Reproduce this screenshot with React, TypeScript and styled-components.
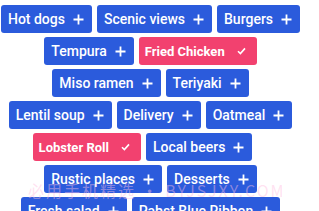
import React from "react";
import styled, { createGlobalStyle } from "styled-components";

interface ITag {
  label: string;
  picked?: boolean;
}

interface IRow {
  shift?: number;
  tags: ITag[];
}

const rows: IRow[] = [
  { tags: [{ label: "Hot dogs" }, { label: "Scenic views" }, { label: "Burgers" }] },
  { tags: [{ label: "Tempura" }, { label: "Fried Chicken", picked: true }] },
  { tags: [{ label: "Miso ramen" }, { label: "Teriyaki" }] },
  { tags: [{ label: "Lentil soup" }, { label: "Delivery" }, { label: "Oatmeal" }] },
  { shift: 16, tags: [{ label: "Lobster Roll", picked: true }, { label: "Local beers" }] },
  { tags: [{ label: "Rustic places" }, { label: "Desserts" }] },
  { tags: [{ label: "Fresh salad" }, { label: "Pabst Blue Ribbon" }] },
];

const PlusIcon = () => (
  <svg width="11" height="11" viewBox="0 0 11 11">
    <path d="M5.5 0.5v10M0.5 5.5h10" stroke="#fff" strokeWidth="1.8" fill="none" />
  </svg>
);

const CheckIcon = () => (
  <svg width="9" height="8" viewBox="0 0 9 8">
    <path d="M1 4.2l2.4 2.4L8 1.4" stroke="#fff" strokeWidth="1.6" fill="none" />
  </svg>
);

const App = () => {
  return (
    <>
      <GlobalStyle />
      <Page>
        <TagCloud>
          {rows.map((row, i) => (
            <TagRow key={i} $shift={row.shift}>
              {row.tags.map((tag) => (
                <Tag key={tag.label} $picked={tag.picked}>
                  <span>{tag.label}</span>
                  {tag.picked ? <CheckIcon /> : <PlusIcon />}
                </Tag>
              ))}
            </TagRow>
          ))}
        </TagCloud>
        <Watermark>必用手机精选 • BYJSJXY.COM</Watermark>
      </Page>
    </>
  );
};

export default App;

const GlobalStyle = createGlobalStyle`
  body {
    margin: 0;
    background: #fff;
    font-family: Roboto, "Noto Sans", sans-serif;
  }
`;

const Page = styled.div`
  position: relative;
  width: 319px;
  height: 211px;
  overflow: hidden;
`;

const TagCloud = styled.div`
  width: 301px;
  padding-top: 5px;
  display: flex;
  flex-direction: column;
  align-items: center;
  gap: 4px;
`;

const TagRow = styled.div<{ $shift?: number }>`
  display: flex;
  gap: 5px;
  margin-right: ${(p) => p.$shift || 0}px;
`;

const Tag = styled.div<{ $picked?: boolean }>`
  display: flex;
  align-items: center;
  height: 28px;
  box-sizing: border-box;
  border-radius: 3px;
  color: #fff;
  white-space: nowrap;
  background: ${(p) => (p.$picked ? "#f2416f" : "#2b5bdc")};
  padding: ${(p) => (p.$picked ? "0 11px 0 6px" : "0 8px 0 7px")};
  gap: ${(p) => (p.$picked ? "12px" : "8px")};
  font-size: ${(p) => (p.$picked ? "13px" : "14px")};
  font-weight: ${(p) => (p.$picked ? 700 : 500)};
  svg {
    flex-shrink: 0;
  }
`;

const Watermark = styled.div`
  position: absolute;
  left: 28px;
  top: 178px;
  font-size: 16px;
  font-family: "Noto Sans CJK SC", sans-serif;
  color: rgba(255, 190, 225, 0.45);
  letter-spacing: 2px;
  white-space: nowrap;
  pointer-events: none;
`;
